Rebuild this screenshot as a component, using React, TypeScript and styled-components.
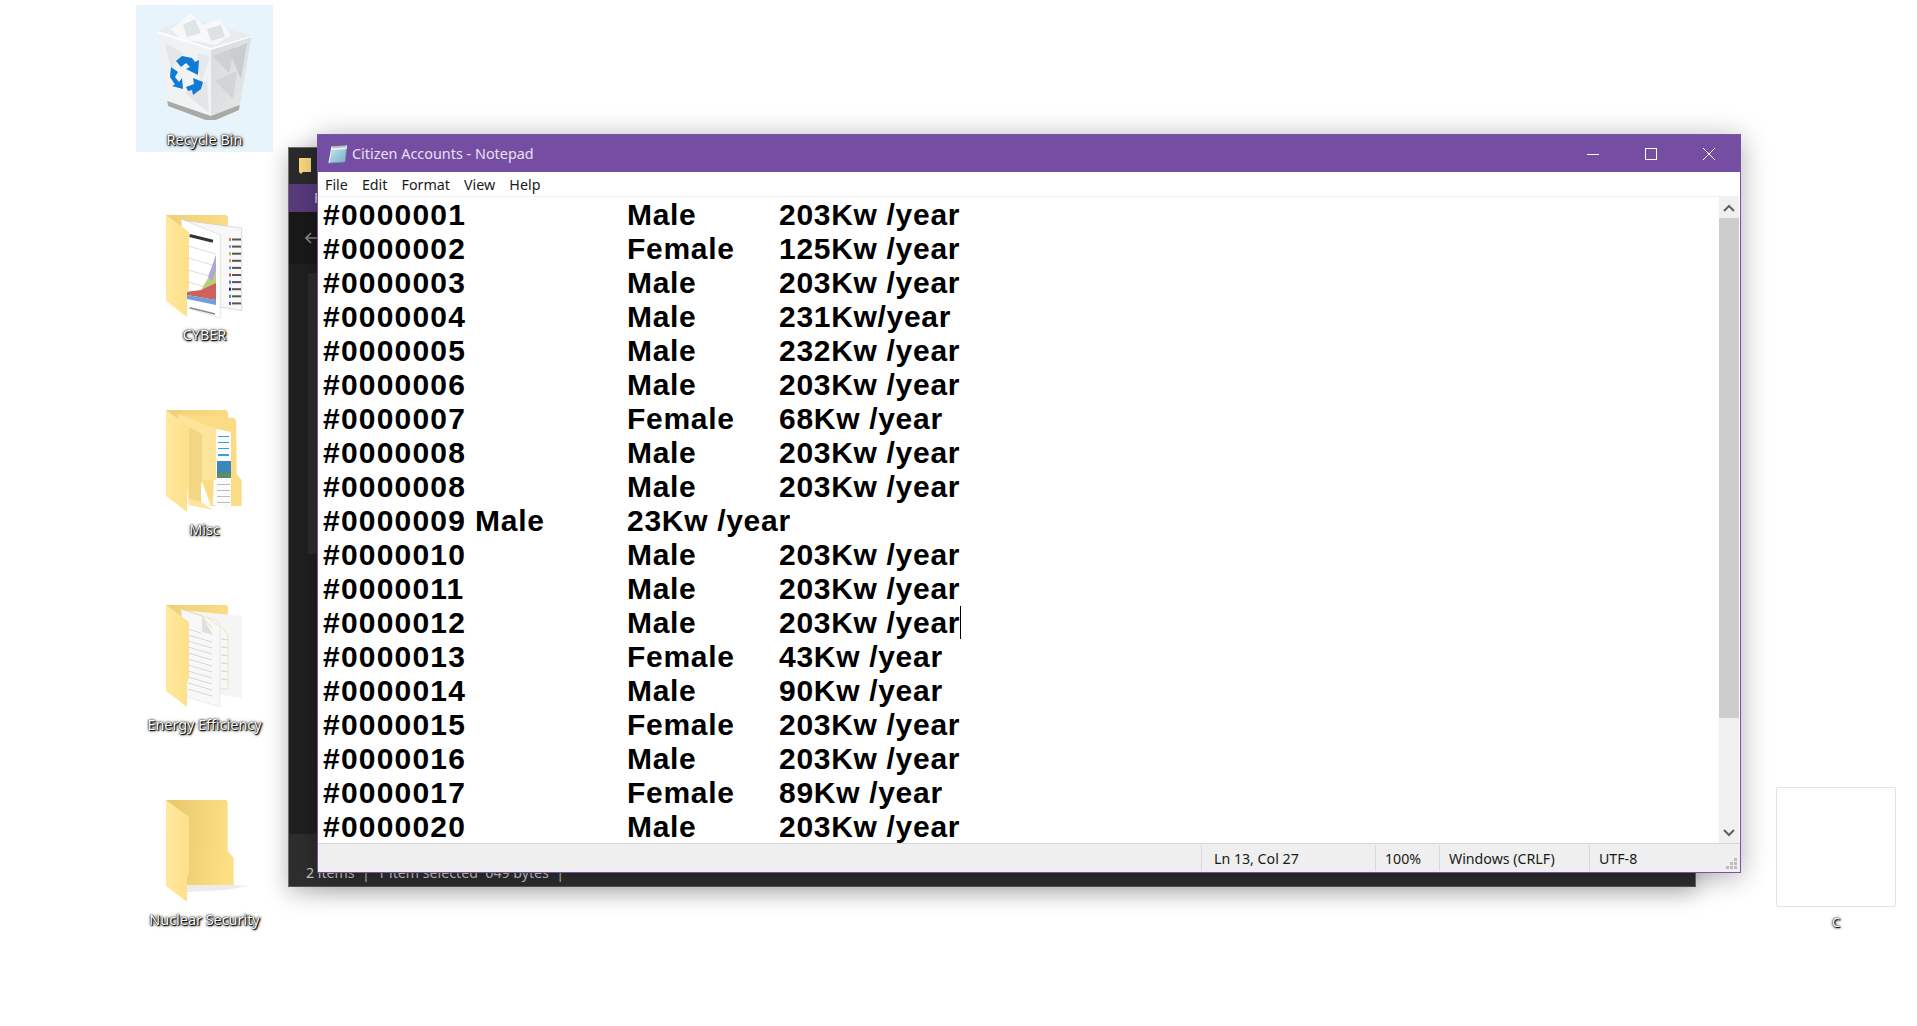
import React from 'react'
import styled, { createGlobalStyle } from 'styled-components'

const GlobalStyle = createGlobalStyle`
  html, body {
    margin: 0;
    padding: 0;
    background: #fff;
    overflow: hidden;
  }
`

const ROWS = [
  '#0000001\t\tMale\t203Kw /year',
  '#0000002\t\tFemale\t125Kw /year',
  '#0000003\t\tMale\t203Kw /year',
  '#0000004\t\tMale\t231Kw/year',
  '#0000005\t\tMale\t232Kw /year',
  '#0000006\t\tMale\t203Kw /year',
  '#0000007\t\tFemale\t68Kw /year',
  '#0000008\t\tMale\t203Kw /year',
  '#0000008\t\tMale\t203Kw /year',
  '#0000009 Male\t23Kw /year',
  '#0000010\t\tMale\t203Kw /year',
  '#0000011\t\tMale\t203Kw /year',
  '#0000012\t\tMale\t203Kw /year',
  '#0000013\t\tFemale\t43Kw /year',
  '#0000014\t\tMale\t90Kw /year',
  '#0000015\t\tFemale\t203Kw /year',
  '#0000016\t\tMale\t203Kw /year',
  '#0000017\t\tFemale\t89Kw /year',
  '#0000020\t\tMale\t203Kw /year',
]

const CARET_ROW = 12

const Desktop = styled.div`
  position: relative;
  width: 1917px;
  height: 1026px;
  background: #fff;
  overflow: hidden;
  font-family: 'Noto Sans', 'Open Sans', sans-serif;
`

const IconColumn = styled.div`
  position: absolute;
  left: 136px;
  top: 5px;
  width: 137px;
  display: flex;
  flex-direction: column;
  gap: 48px;
`

const DesktopIcon = styled.div<{ $selected?: boolean }>`
  width: 137px;
  height: 147px;
  display: flex;
  flex-direction: column;
  align-items: center;
  background: ${p => (p.$selected ? '#e8f4fb' : 'transparent')};
  margin-bottom: ${p => (p.$selected ? '15px' : '0')};
  padding-top: ${p => (p.$selected ? '3px' : '0')};
  box-sizing: border-box;
  svg {
    display: block;
    flex: none;
  }
`

const IconLabel = styled.span<{ $selected?: boolean }>`
  margin-top: ${p => (p.$selected ? '10px' : '-2px')};
  font-size: 14.4px;
  line-height: 20px;
  white-space: nowrap;
  color: #fff;
  text-shadow: 0 0 1px #000, 1px 1px 1px #000, 0 0 3px rgba(0, 0, 0, 0.85), 1px 1px 3px rgba(0, 0, 0, 0.6);
`

const ExplorerWindow = styled.div`
  position: absolute;
  left: 288px;
  top: 147px;
  width: 1408px;
  height: 740px;
  display: flex;
  flex-direction: column;
  background: #202020;
  border: 1px solid #6f6f6f;
  border-bottom-color: #555;
  box-sizing: border-box;
  box-shadow: 0 6px 22px rgba(0, 0, 0, 0.28);
`

const ExplorerTitle = styled.div`
  height: 36px;
  flex: none;
  background: #2b2b2b;
  display: flex;
  align-items: center;
  padding-left: 10px;
`

const ExplorerRibbon = styled.div`
  height: 28px;
  flex: none;
  background: #5a3a7e;
  color: #ddd;
  font-size: 14px;
  padding-left: 25px;
  line-height: 28px;
`

const ExplorerNav = styled.div`
  height: 52px;
  flex: none;
  background: #191919;
  display: flex;
  align-items: center;
  padding-left: 16px;
`

const ExplorerBody = styled.div`
  flex: 1;
  padding: 9px 0 0 19px;
  background: #202020;
`

const ExplorerPane = styled.div`
  width: 9px;
  height: 281px;
  background: #2d2d2d;
`

const ExplorerStatus = styled.div`
  height: 52px;
  flex: none;
  background: #2e2e2e;
  color: #c8c8c8;
  font-size: 14.2px;
  line-height: 18px;
  padding: 30px 10px 0 17px;
  display: flex;
  align-items: flex-start;
  justify-content: space-between;
  box-sizing: border-box;
  white-space: pre;
`

const ViewIcons = styled.div`
  display: flex;
  align-items: flex-start;
  gap: 10px;
  margin-top: -2px;
`

const Notepad = styled.div`
  position: absolute;
  left: 317px;
  top: 134px;
  width: 1424px;
  height: 739px;
  box-sizing: border-box;
  border: 1px solid #7850a8;
  border-top-color: #7b57a8;
  display: flex;
  flex-direction: column;
  background: #fff;
  box-shadow: 0 4px 26px rgba(0, 0, 0, 0.32);
`

const TitleBar = styled.div`
  height: 37px;
  flex: none;
  background: #754ea4;
  color: #e8e0f2;
  display: flex;
  align-items: center;
  padding: 0 2px 0 10px;
  font-size: 14.4px;
`

const TitleText = styled.span`
  margin-left: 4px;
  flex: 1;
`

const WindowButton = styled.div`
  width: 58px;
  height: 37px;
  display: flex;
  align-items: center;
  justify-content: center;
`

const MenuBar = styled.div`
  height: 24px;
  flex: none;
  display: flex;
  align-items: center;
  gap: 14px;
  padding-left: 7px;
  font-size: 14.3px;
  color: #1a1a1a;
  border-bottom: 1px solid #f0f0f0;
`

const EditorArea = styled.div`
  flex: 1;
  min-height: 0;
  display: flex;
`

const TextPane = styled.pre`
  flex: 1;
  margin: 0;
  padding: 1px 0 0 5px;
  overflow: hidden;
  font-family: 'Liberation Sans', Arial, sans-serif;
  font-weight: 700;
  font-size: 30px;
  line-height: 34px;
  letter-spacing: 0.7px;
  color: #000;
  tab-size: 152px;
`

const Line = styled.div`
  height: 34px;
`

const RecordId = styled.span`
  letter-spacing: 1.2px;
`

const Caret = styled.span`
  position: relative;
  &::after {
    content: '';
    position: absolute;
    left: 0;
    top: 0;
    width: 1px;
    height: 33px;
    background: #000;
  }
`

const ScrollBar = styled.div`
  width: 20px;
  flex: none;
  background: #f0f0f0;
  display: flex;
  flex-direction: column;
  margin-right: 1px;
`

const ScrollArrow = styled.div`
  height: 21px;
  flex: none;
  display: flex;
  align-items: center;
  justify-content: center;
`

const ScrollTrack = styled.div`
  flex: 1;
`

const ScrollThumb = styled.div`
  height: 500px;
  background: #cdcdcd;
`

const StatusBar = styled.div`
  position: relative;
  height: 28px;
  flex: none;
  display: flex;
  background: #efefef;
  border-top: 1px solid #d6d6d6;
  font-size: 14.2px;
  color: #1a1a1a;
`

const StatusCell = styled.div<{ $width?: number; $pad?: number }>`
  box-sizing: border-box;
  width: ${p => (p.$width ? `${p.$width}px` : 'auto')};
  flex: ${p => (p.$width ? 'none' : '1')};
  border-left: ${p => (p.$width ? '1px solid #d9d9d9' : 'none')};
  padding-left: ${p => p.$pad ?? 0}px;
  margin: 1px 0;
  line-height: 27px;
  white-space: nowrap;
`

const Grip = styled.svg`
  position: absolute;
  right: 2px;
  bottom: 2px;
`

const Thumbnail = styled.div`
  position: absolute;
  left: 1776px;
  top: 787px;
  width: 120px;
  display: flex;
  flex-direction: column;
  align-items: center;
`

const ThumbnailFrame = styled.div`
  width: 120px;
  height: 120px;
  box-sizing: border-box;
  background: #fff;
  border: 1px solid #e4e4e4;
  border-radius: 2px;
`

const ThumbnailLabel = styled(IconLabel)`
  margin-top: 7px;
  font-size: 13px;
  line-height: 16px;
`

const Defs = () => (
  <svg width="0" height="0" style={{ position: 'absolute' }}>
    <defs>
      <linearGradient id="fback" x1="0" y1="0" x2="1" y2="0.1">
        <stop offset="0" stopColor="#e9c76c" />
        <stop offset="0.35" stopColor="#efcf75" />
        <stop offset="1" stopColor="#fde084" />
      </linearGradient>
      <linearGradient id="ffront" x1="0" y1="0" x2="1" y2="0.1">
        <stop offset="0" stopColor="#ffe99f" />
        <stop offset="1" stopColor="#fde08a" />
      </linearGradient>
      <linearGradient id="tab" x1="0" y1="0" x2="1" y2="0">
        <stop offset="0" stopColor="#efcf78" />
        <stop offset="1" stopColor="#fbdc84" />
      </linearGradient>
      <linearGradient id="binl" x1="0" y1="0" x2="1" y2="1">
        <stop offset="0" stopColor="#eef1f3" />
        <stop offset="1" stopColor="#f2f3f4" />
      </linearGradient>
      <linearGradient id="binr" x1="0" y1="0" x2="1" y2="1">
        <stop offset="0" stopColor="#d7dbdd" />
        <stop offset="1" stopColor="#e6e8e9" />
      </linearGradient>
      <linearGradient id="note" x1="0" y1="0" x2="1" y2="1">
        <stop offset="0" stopColor="#cfe9f2" />
        <stop offset="1" stopColor="#6fb0c6" />
      </linearGradient>
    </defs>
  </svg>
)

const FolderFront = () => (
  <polygon points="0,0 23,17 23,73 21,78 21,102 0,86" fill="url(#ffront)" />
)

const FolderTab = () => <polygon points="0,0 60,0 62,2 62,14 0,14" fill="url(#tab)" />

const FolderSvg = ({ children }: { children: React.ReactNode }) => (
  <svg width="96" height="112" viewBox="-9 0 96 112">
    {children}
  </svg>
)

const RecycleBinIcon = () => (
  <svg width="96" height="112" viewBox="0 -3 96 112">
    <polygon points="0.7,20 54,37 54,111 11,95" fill="url(#binl)" />
    <polygon points="54,37 94.7,24.7 82,99 54,111" fill="url(#binr)" />
    <polygon points="8,32 26,42 14,58" fill="#e4e7e9" />
    <polygon points="40,42 53,46 44,72" fill="#e6e9eb" />
    <polygon points="56,45 78,36 72,62" fill="#cdd1d3" />
    <polygon points="72,40 90,32 84,68" fill="#c9cdcf" />
    <polygon points="58,70 80,60 76,88" fill="#d2d5d7" />
    <polygon points="28,82 50,70 52,102" fill="#e3e5e7" />
    <polygon points="0.7,20 32,7 94.7,24.7 54,37" fill="#e9ecee" />
    <polygon points="14,18 34,2 46,14 62,8 74,24 58,34 40,30 26,30" fill="#f7f8f9" />
    <polygon points="26,14 38,8 44,22 30,26" fill="#e1e4e6" />
    <polygon points="50,18 64,14 68,26 54,30" fill="#dfe2e4" />
    <polygon points="0.7,20 54,37 94.7,24.7 94.7,26 54,39 0.7,22" fill="#fdfdfd" />
    <polygon points="10.3,90 54,105 82.6,94 82,99 54,111 11,95" fill="#a9a9a5" />
    <g fill="#0f7bd2">
      <polygon points="19,50 25,45 35,47 38,51 42,49 41,64 29,58 33,56 29,52 24,56" />
      <polygon points="14,56 21,61 18,66 22,71 25,67 26,78 15,75 18,73.5 13,66" />
      <polygon points="29,76 37,73 36,67 46,71 44,78 36,84 35,79 31,80" />
    </g>
  </svg>
)

const LEGEND = ['#e8792f', '#9a9ad8', '#a3c04a', '#d9a13a', '#45a8d8', '#d24a4a', '#4a7ad0', '#1c1c9c', '#2aa577', '#6a4ab0']

const CyberIcon = () => (
  <FolderSvg>
    <FolderTab />
    <polygon points="15,5 75.7,13 75.7,95.7 54,92" fill="#f8f8f8" stroke="#c8c8c8" strokeWidth="0.6" />
    {LEGEND.map((color, i) => (
      <g key={color}>
        <rect x="63" y={23 + i * 7.1} width="2" height="3" fill={color} />
        <rect x="66" y={23.5 + i * 7.1} width="9" height="2" fill="#555" />
      </g>
    ))}
    <polygon points="15,4 54.3,20 54.3,103 21,93" fill="#fff" stroke="#d4d4d4" strokeWidth="0.6" />
    <g stroke="#d0d0d0" strokeWidth="0.7">
      <line x1="22" y1="31" x2="50" y2="39" />
      <line x1="22" y1="43" x2="50" y2="51" />
      <line x1="22" y1="55" x2="50" y2="63" />
      <line x1="22" y1="67" x2="50" y2="75" />
    </g>
    <rect x="24" y="19" width="24" height="3" fill="#333" transform="rotate(14 24 19)" />
    <polygon points="35,75 45,58 50,40 50,55 50,72" fill="#b7cf7d" />
    <polygon points="42,62 50,40 50,55 46,66" fill="#aaa7dc" />
    <polygon points="21,76.7 35,75 50,68 50,85 21,80" fill="#cf605c" />
    <polygon points="21,80 50,85 50,90 21,84" fill="#6f9fdc" />
    <rect x="24" y="92" width="26" height="1.5" fill="#888" transform="rotate(14 24 92)" />
    <FolderFront />
  </FolderSvg>
)

const MiscIcon = () => (
  <FolderSvg>
    <FolderTab />
    <polygon points="11.7,4 68,8 70,10 70.7,64.6 75.7,70 75.7,96 45,96" fill="#fbdc84" />
    <polygon points="50,18.7 65,22 65,100 46.7,94.5" fill="#fbfbfb" />
    <g fill="#35a0e6">
      <rect x="52" y="26" width="11" height="1" />
      <rect x="52" y="32" width="11" height="1" />
      <rect x="52" y="38" width="11" height="1" />
      <rect x="52" y="44" width="11" height="2" />
    </g>
    <rect x="51" y="51" width="14" height="17" fill="#3b87b5" />
    <rect x="51" y="63" width="14" height="5" fill="#5e8d63" />
    <g fill="#bdbdbd">
      <rect x="51" y="74" width="13" height="1" />
      <rect x="51" y="80" width="13" height="1" />
      <rect x="51" y="86" width="13" height="1" />
      <rect x="51" y="92" width="13" height="1" />
    </g>
    <polygon points="11.7,3.9 50,18.7 50,70 37,70 35,75 35,92 46.7,100 23,95" fill="#fde49a" />
    <polygon points="23,17 36,24 36,70 35,75 35,92 23,88" fill="#f3d684" />
    <FolderFront />
  </FolderSvg>
)

const EnergyIcon = () => (
  <FolderSvg>
    <FolderTab />
    <polygon points="15,5 75.7,11 75.7,93 54,90" fill="#f5f5f5" />
    <polygon points="30,10 50,15 62,30 62,84 54,84" fill="#f7f7f7" stroke="#f2d88e" strokeWidth="0.6" />
    <g stroke="#c4c4c4" strokeWidth="0.7">
      <line x1="55" y1="34" x2="62" y2="35" />
      <line x1="55" y1="42" x2="62" y2="43" />
      <line x1="55" y1="50" x2="62" y2="51" />
      <line x1="55" y1="58" x2="62" y2="59" />
      <line x1="55" y1="66" x2="62" y2="67" />
      <line x1="55" y1="74" x2="62" y2="75" />
    </g>
    <polygon points="15,4 40,12 54,22 54,102 21,92" fill="#f8f8f8" stroke="#e0e0e0" strokeWidth="0.6" />
    <path d="M15 4L36 11L46 23" fill="none" stroke="#f0d488" strokeWidth="0.8" />
    <polygon points="36,11 47,30 36,27" fill="#e0e0e0" />
    <g stroke="#c8c8c8" strokeWidth="0.7">
      <line x1="22" y1="24" x2="35" y2="28" />
      <line x1="22" y1="30" x2="46" y2="37" />
      <line x1="22" y1="36" x2="46" y2="43" />
      <line x1="22" y1="42" x2="46" y2="49" />
      <line x1="22" y1="48" x2="46" y2="55" />
      <line x1="22" y1="54" x2="46" y2="61" />
      <line x1="22" y1="60" x2="46" y2="67" />
      <line x1="22" y1="66" x2="46" y2="73" />
      <line x1="22" y1="72" x2="46" y2="79" />
      <line x1="22" y1="78" x2="46" y2="85" />
      <line x1="22" y1="84" x2="46" y2="91" />
    </g>
    <FolderFront />
  </FolderSvg>
)

const NuclearIcon = () => (
  <FolderSvg>
    <polygon points="21,85 67.7,85 82,86 60,90 21,92" fill="#ececec" />
    <polygon points="0,0 60,0 61.7,2 61.7,51 67.7,58 67.7,85 21,85 0,60" fill="url(#fback)" />
    <FolderFront />
  </FolderSvg>
)

const NotepadIcon = () => (
  <svg width="20" height="20" viewBox="0 0 20 20">
    <polygon points="4,2.5 19,1.5 17,18 1,19" fill="url(#note)" stroke="#6f93a3" strokeWidth="0.6" />
    <polygon points="4,2.5 19,1.5 18.6,5 3.6,6" fill="#e4eef3" />
    <path d="M5 4V1M7 4V1M9 4V1M11 3.8V1M13 3.6V.8M15 3.5V.8M17 3.3V.6" stroke="#666" strokeWidth="0.7" />
    <path d="M1 19L4 2.5" stroke="#e8f0f3" strokeWidth="1.2" />
  </svg>
)

const renderRow = (row: string) => {
  const id = row.slice(0, 8)
  return (
    <>
      <RecordId>{id}</RecordId>
      {row.slice(8)}
    </>
  )
}

const App = () => (
  <Desktop>
    <GlobalStyle />
    <Defs />
    <IconColumn>
      <DesktopIcon $selected>
        <RecycleBinIcon />
        <IconLabel $selected>Recycle Bin</IconLabel>
      </DesktopIcon>
      <DesktopIcon>
        <CyberIcon />
        <IconLabel>CYBER</IconLabel>
      </DesktopIcon>
      <DesktopIcon>
        <MiscIcon />
        <IconLabel>Misc</IconLabel>
      </DesktopIcon>
      <DesktopIcon>
        <EnergyIcon />
        <IconLabel>Energy Efficiency</IconLabel>
      </DesktopIcon>
      <DesktopIcon>
        <NuclearIcon />
        <IconLabel>Nuclear Security</IconLabel>
      </DesktopIcon>
    </IconColumn>

    <ExplorerWindow>
      <ExplorerTitle>
        <svg width="13" height="18" viewBox="0 0 13 18">
          <polygon points="0,1 12,1 12,15 4,15 2,17 0,15" fill="#fbdc82" />
        </svg>
      </ExplorerTitle>
      <ExplorerRibbon>F</ExplorerRibbon>
      <ExplorerNav>
        <svg width="14" height="14" viewBox="0 0 14 14" fill="none" stroke="#8a8a8a" strokeWidth="1.6">
          <path d="M13 7H1M6 2L1 7L6 12" />
        </svg>
      </ExplorerNav>
      <ExplorerBody>
        <ExplorerPane />
      </ExplorerBody>
      <ExplorerStatus>
        <span>{'2 items  |  1 item selected  649 bytes  |'}</span>
        <ViewIcons>
          <svg width="17" height="14" viewBox="0 0 17 14">
            <rect x="0" y="2" width="5" height="8" fill="#eee" />
            <rect x="1" y="5" width="2" height="3" fill="#a22" />
            <rect x="6" y="5" width="9" height="1" fill="#888" />
          </svg>
          <svg width="18" height="12" viewBox="0 0 18 12">
            <rect x="0.5" y="0.5" width="17" height="9" fill="#3f6f9f" stroke="#ddd" strokeWidth="1" />
          </svg>
        </ViewIcons>
      </ExplorerStatus>
    </ExplorerWindow>

    <Notepad>
      <TitleBar>
        <NotepadIcon />
        <TitleText>Citizen Accounts - Notepad</TitleText>
        <WindowButton>
          <svg width="14" height="14" viewBox="0 0 14 14">
            <rect x="1" y="7" width="12" height="1" fill="#fff" />
          </svg>
        </WindowButton>
        <WindowButton>
          <svg width="14" height="14" viewBox="0 0 14 14" fill="none" stroke="#fff">
            <rect x="1.5" y="1.5" width="11" height="11" />
          </svg>
        </WindowButton>
        <WindowButton>
          <svg width="14" height="14" viewBox="0 0 14 14" fill="none" stroke="#fff" strokeWidth="1">
            <path d="M1 1L13 13M13 1L1 13" />
          </svg>
        </WindowButton>
      </TitleBar>
      <MenuBar>
        <span>File</span>
        <span>Edit</span>
        <span>Format</span>
        <span>View</span>
        <span>Help</span>
      </MenuBar>
      <EditorArea>
        <TextPane>
          {ROWS.map((row, i) => (
            <Line key={i}>
              {renderRow(row)}
              {i === CARET_ROW && <Caret />}
            </Line>
          ))}
        </TextPane>
        <ScrollBar>
          <ScrollArrow>
            <svg width="12" height="8" viewBox="0 0 12 8" fill="none" stroke="#606060" strokeWidth="2">
              <path d="M1 7L6 2L11 7" />
            </svg>
          </ScrollArrow>
          <ScrollThumb />
          <ScrollTrack />
          <ScrollArrow>
            <svg width="12" height="8" viewBox="0 0 12 8" fill="none" stroke="#606060" strokeWidth="2">
              <path d="M1 1L6 6L11 1" />
            </svg>
          </ScrollArrow>
        </ScrollBar>
      </EditorArea>
      <StatusBar>
        <StatusCell />
        <StatusCell $width={174} $pad={12}>Ln 13, Col 27</StatusCell>
        <StatusCell $width={64} $pad={9}>100%</StatusCell>
        <StatusCell $width={150} $pad={9}>Windows (CRLF)</StatusCell>
        <StatusCell $width={151} $pad={9}>UTF-8</StatusCell>
        <Grip width="12" height="12" viewBox="0 0 12 12" fill="#bdbdbd">
          <rect x="8" y="0" width="3" height="3" />
          <rect x="4" y="4" width="3" height="3" />
          <rect x="8" y="4" width="3" height="3" />
          <rect x="0" y="8" width="3" height="3" />
          <rect x="4" y="8" width="3" height="3" />
          <rect x="8" y="8" width="3" height="3" />
        </Grip>
      </StatusBar>
    </Notepad>

    <Thumbnail>
      <ThumbnailFrame />
      <ThumbnailLabel>C</ThumbnailLabel>
    </Thumbnail>
  </Desktop>
)

export default App
